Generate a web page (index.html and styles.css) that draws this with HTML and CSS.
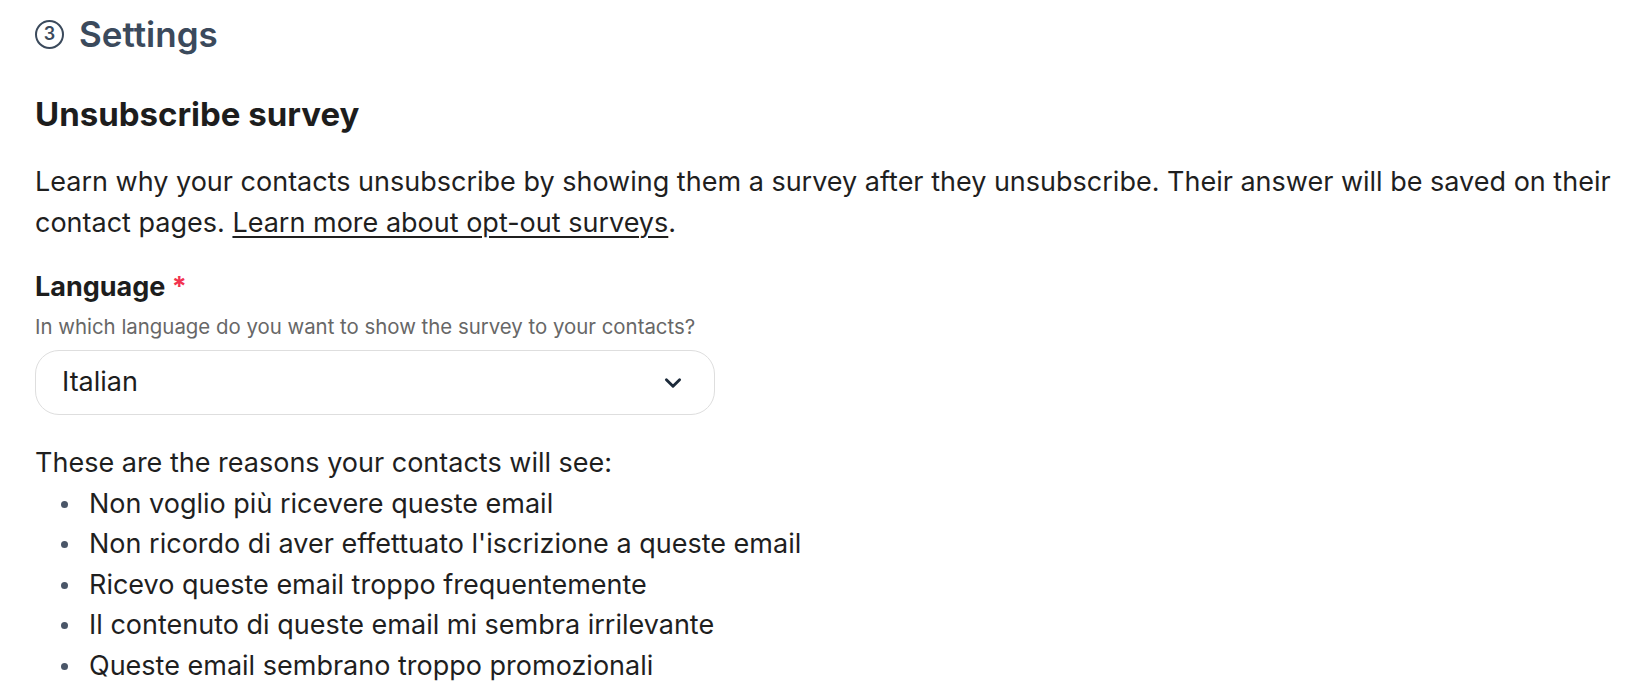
FILE: index.html
```html
<!DOCTYPE html>
<html lang="en">
<head>
<meta charset="utf-8">
<title>Settings</title>
<link rel="stylesheet" href="styles.css">
</head>
<body>
<main class="page">
  <header class="step-header">
    <span class="step-badge">3</span>
    <h1 class="step-title">Settings</h1>
  </header>

  <h2 class="section-title">Unsubscribe survey</h2>

  <p class="intro">Learn why your contacts unsubscribe by showing them a survey after they unsubscribe. Their answer will be saved on their contact pages. <a href="#" class="link">Learn more about opt-out surveys</a>.</p>

  <div class="field">
    <label class="field-label">Language <span class="required">*</span></label>
    <div class="field-help">In which language do you want to show the survey to your contacts?</div>
    <div class="select">
      <span class="select-value">Italian</span>
      <svg class="chevron" viewBox="0 0 20 20" width="22" height="22" aria-hidden="true">
        <path d="M4 7 L10 13 L16 7" fill="none" stroke="#1c2a3a" stroke-width="2.6" stroke-linecap="round" stroke-linejoin="round"/>
      </svg>
    </div>
  </div>

  <p class="reasons-intro">These are the reasons your contacts will see:</p>
  <ul class="reasons">
    <li>Non voglio più ricevere queste email</li>
    <li>Non ricordo di aver effettuato l'iscrizione a queste email</li>
    <li>Ricevo queste email troppo frequentemente</li>
    <li>Il contenuto di queste email mi sembra irrilevante</li>
    <li>Queste email sembrano troppo promozionali</li>
  </ul>
</main>
</body>
</html>
```

FILE: styles.css
```css
html, body {
  margin: 0;
  padding: 0;
  background: #ffffff;
}

body {
  font-family: Inter, "Noto Sans", "Liberation Sans", sans-serif;
  color: #1f1f1f;
  font-size: 27px;
  line-height: 40.5px;
}

.page {
  padding: 14px 15px 0 35px;
}

.step-header {
  display: flex;
  align-items: center;
  gap: 15px;
  height: 40px;
}

.step-badge {
  box-sizing: border-box;
  width: 29px;
  height: 29px;
  border: 2.5px solid #3b4a5c;
  border-radius: 50%;
  color: #3b4a5c;
  font-size: 18px;
  font-weight: 600;
  line-height: 24px;
  text-align: center;
}

.step-title {
  margin: 0;
  font-size: 35px;
  font-weight: 600;
  line-height: 40px;
  color: #3b4a5c;
}

.section-title {
  margin: 40px 0 0 0;
  font-size: 33px;
  font-weight: 700;
  line-height: 40px;
  color: #1d1d1d;
}

.intro {
  margin: 28px 0 0 0;
}

.link {
  color: #1f1f1f;
  text-decoration: underline;
  text-underline-offset: 4px;
  text-decoration-thickness: 1.5px;
}

.field {
  margin-top: 28px;
  display: flex;
  flex-direction: column;
}

.field-label {
  font-weight: 700;
  line-height: 32px;
  color: #1d1d1d;
}

.required {
  color: #f2334f;
}

.field-help {
  margin-top: 12px;
  font-size: 20.4px;
  line-height: 24px;
  color: #676767;
}

.select {
  box-sizing: border-box;
  margin-top: 11px;
  width: 680px;
  height: 65px;
  border: 1.5px solid #dedede;
  border-radius: 24px;
  display: flex;
  align-items: center;
  justify-content: space-between;
  padding: 0 30px 0 26px;
  background: #ffffff;
}

.select-value {
  color: #1d1d1d;
}

.chevron {
  display: block;
}

.reasons-intro {
  margin: 28px 0 0 0;
}

.reasons {
  margin: 0;
  padding-left: 54px;
  list-style: none;
}

.reasons li {
  position: relative;
}

.reasons li::before {
  content: "";
  position: absolute;
  left: -28px;
  top: 17px;
  width: 7px;
  height: 7px;
  border-radius: 50%;
  background: #4a5668;
}
```
